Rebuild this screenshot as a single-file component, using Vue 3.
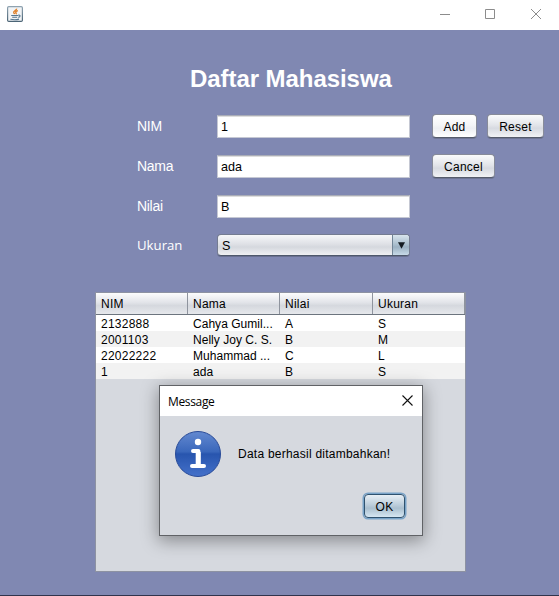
<script setup>
import { ref } from 'vue'

const nim = ref('1')
const nama = ref('ada')
const nilai = ref('B')
const columns = ['NIM', 'Nama', 'Nilai', 'Ukuran']
const rows = [
  ['2132888', 'Cahya Gumil...', 'A', 'S'],
  ['2001103', 'Nelly Joy C. S.', 'B', 'M'],
  ['22022222', 'Muhammad ...', 'C', 'L'],
  ['1', 'ada', 'B', 'S'],
]
</script>

<template>
  <div class="window">
    <header class="titlebar">
      <svg class="java" width="16" height="16" viewBox="0 0 16 16">
        <defs>
          <linearGradient id="frame" x1="0" y1="0" x2="0" y2="1">
            <stop offset="0" stop-color="#8fa3b1" />
            <stop offset="1" stop-color="#4c6576" />
          </linearGradient>
        </defs>
        <rect x=".6" y=".6" width="14.8" height="14.8" rx="1.2" fill="#f2f4f6" stroke="url(#frame)" stroke-width="1.2" />
        <path d="M9.6 2.6C10 4.4 6 4.8 6.7 6.6c.2.6.8.9.9 1.5M10.9 4.6c-2 .7-2.8 1.4-1.9 2.3.4.5.2.9-.2 1.2" fill="none" stroke="#e0822c" stroke-width="1.4" />
        <path d="M4.2 9.5h6.8M5.2 11.3h5M11.2 9.2c2.5-.5 2.4 1.6.1 2.2M3.4 13.2c2.4.5 6.6.5 8.6-.1" fill="none" stroke="#55768f" stroke-width="1.1" />
      </svg>
      <div class="controls">
        <svg width="10" height="10" viewBox="0 0 10 10"><path d="M0 5.5h10" /></svg>
        <svg width="10" height="10" viewBox="0 0 10 10"><path d="M.5.5h9v9h-9z" /></svg>
        <svg class="close" width="10" height="10" viewBox="0 0 10 10"><path d="M0 0l10 10M10 0L0 10" /></svg>
      </div>
    </header>

    <main class="content">
      <h1>Daftar Mahasiswa</h1>
      <div class="form">
        <label>NIM</label>
        <input v-model="nim" class="field first" />
        <div class="actions">
          <button class="btn add">Add</button>
          <button class="btn reset">Reset</button>
        </div>
        <label>Nama</label>
        <input v-model="nama" class="field" />
        <div class="actions"><button class="btn cancel">Cancel</button></div>
        <label>Nilai</label>
        <input v-model="nilai" class="field" />
        <span></span>
        <label class="size-label">Ukuran</label>
        <div class="combo">
          <span class="combo-value">S</span>
          <span class="combo-arrow">
            <svg width="7" height="7" viewBox="0 0 7 7"><path d="M0 .3h7L3.5 6.8z" fill="#151c22" /></svg>
          </span>
        </div>
      </div>

      <section class="table">
        <div class="row head"><span v-for="c in columns" :key="c">{{ c }}</span></div>
        <div v-for="r in rows" :key="r[0]" class="row"><span v-for="(c, i) in r" :key="i">{{ c }}</span></div>
      </section>
    </main>

    <div class="dialog">
      <div class="dialog-title">
        <span>Message</span>
        <svg width="11" height="11" viewBox="0 0 11 11"><path d="M.5.5l10 10M10.5.5l-10 10" stroke="#111" stroke-width="1.1" /></svg>
      </div>
      <div class="dialog-body">
        <svg width="48" height="48" viewBox="0 0 48 48">
          <defs>
            <linearGradient id="ball" x1="0" y1="0" x2="0" y2="1">
              <stop offset="0" stop-color="#6389d0" />
              <stop offset=".45" stop-color="#3a67bb" />
              <stop offset=".5" stop-color="#2855ae" />
              <stop offset="1" stop-color="#4471ca" />
            </linearGradient>
          </defs>
          <circle cx="24" cy="24" r="22.5" fill="url(#ball)" stroke="#294b98" />
          <circle cx="24" cy="12" r="3.2" fill="#fff" />
          <path d="M19 21h5.4v15M18 36h12" fill="none" stroke="#fff" stroke-width="4" stroke-linecap="round" stroke-linejoin="round" />
          <path d="M24.2 22v14" stroke="#fff" stroke-width="5" />
        </svg>
        <p>Data berhasil ditambahkan!</p>
      </div>
      <div class="dialog-actions"><button class="btn ok">OK</button></div>
    </div>
  </div>
</template>

<style>
body { margin: 0; overflow: hidden; }
</style>

<style scoped>
* { box-sizing: border-box; }
.window {
  position: relative;
  width: 559px;
  height: 596px;
  display: flex;
  flex-direction: column;
  background: #8088b2;
  border-bottom: 1px solid #30344c;
  font-family: "Liberation Sans", Arial, sans-serif;
  font-size: 12px;
  color: #000;
}
svg { display: block; }
.titlebar {
  height: 30px;
  display: flex;
  justify-content: space-between;
  padding: 6px 18px 0 7px;
  background: #fff;
}
.controls { display: flex; gap: 35px; padding-top: 3px; }
.controls svg { fill: none; stroke: #8c8c8c; stroke-width: 1; }
.controls .close { margin-left: 1px; }
.content { flex: 1; display: flex; flex-direction: column; }
h1 {
  margin: 35px 0 0 190px;
  height: 28px;
  line-height: 28px;
  font-size: 24px;
  font-weight: bold;
  letter-spacing: -.06px;
  color: #fff;
  white-space: nowrap;
}
.form {
  display: grid;
  grid-template-columns: 80px 193px 149px;
  grid-template-rows: 24px 24px 24px 24px;
  row-gap: 16px;
  column-gap: 0;
  margin: 21px 0 0 137px;
}
label {
  color: #fff;
  font-size: 14px;
  line-height: 24px;
  letter-spacing: -.3px;
}
.size-label {
  font-family: "Open Sans", "Noto Sans", sans-serif;
  font-size: 13.2px;
  line-height: 23px;
  letter-spacing: 0;
}
.field {
  width: 193px;
  height: 23px;
  margin: 1px 0 0;
  padding: 1px 3px 0;
  border: 1px solid #c5c8d3;
  border-top-color: #a9acb7;
  background: #fff;
  box-shadow: inset 0 1px 0 #ddd;
  outline: none;
  font: 12.6px/20px "Liberation Sans", Arial, sans-serif;
  color: #000;
}
.actions { display: flex; gap: 10px; padding-left: 22px; }
.btn {
  flex: none;
  height: 24px;
  padding: 1px 0 0;
  border: 1px solid #878b99;
  border-bottom-color: #555b6b;
  border-radius: 4px;
  background: linear-gradient(#fafbfc, #e3e5ea 45%, #d7dae1 60%, #f1f2f5);
  box-shadow: 0 1px 0 #6e7594;
  font: 12px/20px "Liberation Sans", Arial, sans-serif;
  letter-spacing: .25px;
  color: #000;
}
.add { width: 45px; background: linear-gradient(#fff, #f4f5f7 45%, #eceef2 60%, #fff); }
.reset { width: 57px; }
.cancel { width: 63px; }
.combo {
  display: flex;
  width: 193px;
  height: 22px;
  border: 1px solid #747c91;
  border-bottom-color: #4e586b;
  border-radius: 4px;
  background: linear-gradient(#f6f7f9, #dfe1e6 45%, #d5d8de 60%, #eff0f3);
  box-shadow: 0 1px 0 #697091;
  overflow: hidden;
}
.combo-value { flex: 1; padding-left: 4px; line-height: 22px; font-size: 12.6px; }
.combo-arrow {
  display: flex;
  align-items: center;
  justify-content: center;
  width: 17px;
  border-left: 1px solid #718596;
  background: linear-gradient(#d8e4ed, #a7bccb 50%, #9bb1c2 60%, #c7dae8);
}
.table {
  width: 371px;
  height: 280px;
  margin: 34px 0 0 95px;
  border: 1px solid #8d92a2;
  background: #d6d9df;
}
.row {
  display: grid;
  grid-template-columns: 92px 92px 93px 92px;
  height: 16px;
  background: #fff;
}
.row:nth-child(odd) { background: #f2f2f2; }
.row span { padding-left: 5px; line-height: 18px; white-space: nowrap; letter-spacing: .25px; }
.row:not(.head) span:nth-child(2) { letter-spacing: .03px; }
.row.head {
  height: 22px;
  border-bottom: 1px solid #6c747e;
  background: linear-gradient(#fcfcfd, #e2e4e9 45%, #d5d8de 60%, #e6e8ec);
}
.row.head span { height: 21px; line-height: 23px; border-right: 1px solid #8f949e; }
.dialog {
  position: absolute;
  left: 159px;
  top: 385px;
  width: 264px;
  height: 151px;
  border: 1px solid #606266;
  background: #d6d9df;
  box-shadow: 0 4px 16px 1px rgba(0, 0, 0, .36);
}
.dialog-title {
  display: flex;
  justify-content: space-between;
  height: 30px;
  padding: 9px 9px 0 8px;
  background: #fff;
  font: 12px/13px "Open Sans", "Noto Sans", sans-serif;
  letter-spacing: -.35px;
}
.dialog-body { display: flex; padding: 14px 0 0 14px; }
.dialog-body p { margin: 17px 0 0 16px; line-height: 14px; letter-spacing: .24px; white-space: nowrap; }
.dialog-actions { display: flex; justify-content: flex-end; padding: 16px 17px 0 0; }
.ok {
  width: 41px;
  height: 24px;
  border: 1px solid #2f526f;
  background: linear-gradient(#e8eff5, #bccddb 45%, #aabfcf 60%, #d5e6f2);
  box-shadow: 0 0 0 1.5px #79a3c8;
}
</style>
